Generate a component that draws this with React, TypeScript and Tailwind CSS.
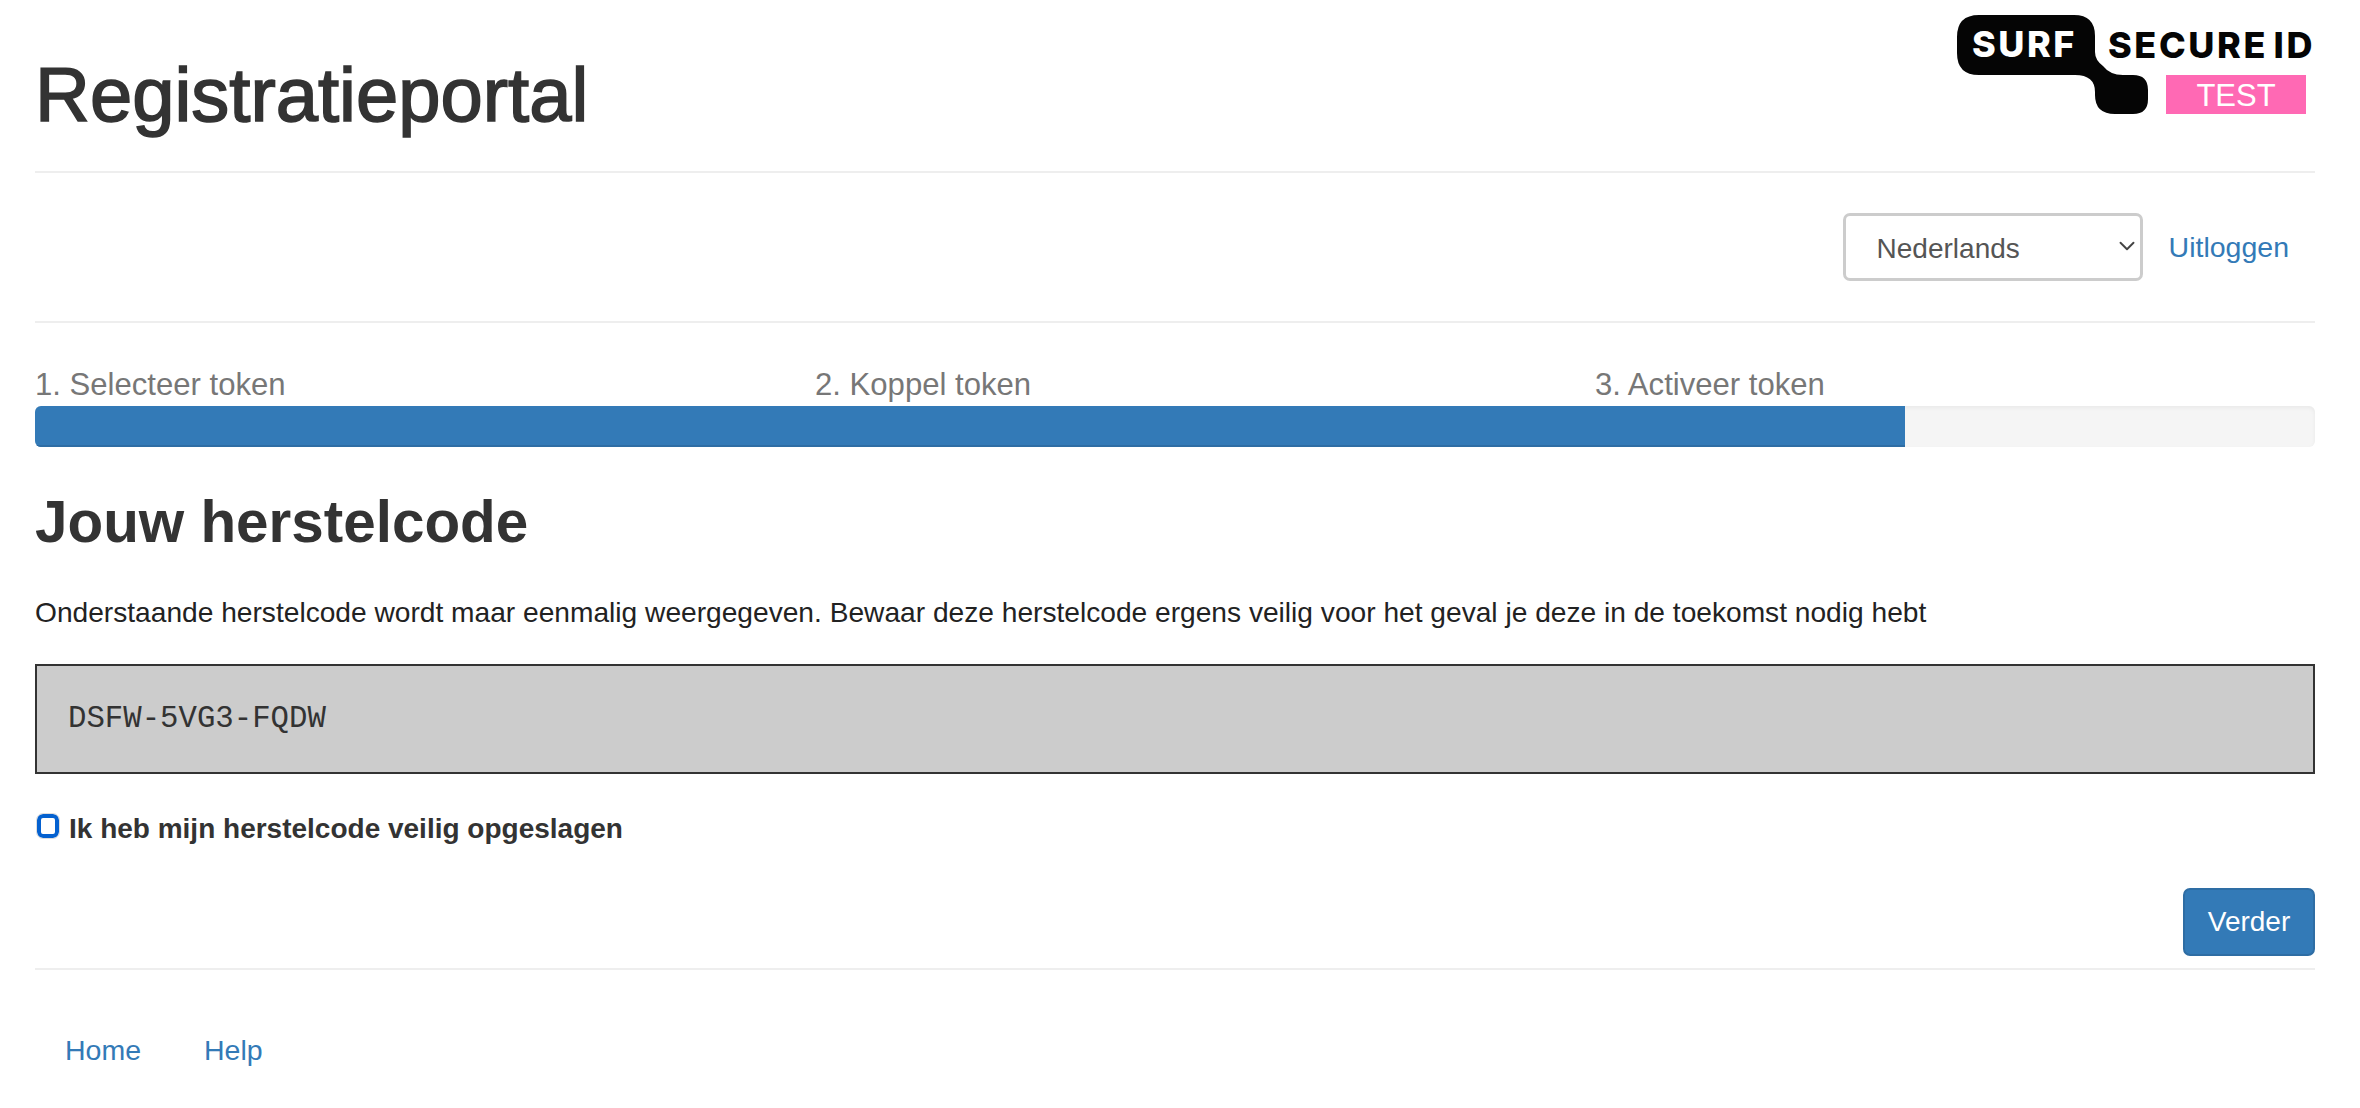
import { ChevronDown } from "lucide-react";

const sans = "font-['Liberation_Sans',Arial,sans-serif]";

function Logo() {
  return (
    <svg width="358" height="114" viewBox="0 0 358 114" className="block overflow-visible" aria-label="SURF Secure ID test">
      <path
        d="M22 15 H117 Q138 15 138 36 V52 Q138 60 146 66 Q153 75 166 75 H176 Q191 75 191 90 V99 Q191 114 176 114 H158 Q138 114 138 95 V92 Q138 75 118 75 H22 Q0 75 0 53 V37 Q0 15 22 15 Z"
        fill="#050505"
      />
      <text x="15" y="57" fill="#fff" fontFamily="Inter, sans-serif" fontWeight="800" fontSize="36" letterSpacing="2.5">SURF</text>
      <text x="151" y="58" fill="#050505" fontFamily="Inter, sans-serif" fontWeight="800" fontSize="36" letterSpacing="2.6" wordSpacing="-5">SECURE ID</text>
      <rect x="209" y="75" width="140" height="39" fill="#ff69b4" />
      <text x="279" y="106" fill="#fff" fontFamily="Liberation Sans, sans-serif" fontSize="31" textAnchor="middle">TEST</text>
    </svg>
  );
}

export default function App() {
  return (
    <div className={`${sans} bg-white h-[1108px] overflow-hidden pl-[35px] pr-[45px] text-[31px] text-[#333]`}>
      <header className="relative h-[173px] border-b-2 border-[#eee] flex items-end justify-between">
        <h1 className="text-[76px] leading-none pb-[38px] font-normal [-webkit-text-stroke:1.6px_#333]">Registratieportal</h1>
        <div className="self-start">
          <Logo />
        </div>
      </header>

      <nav className="h-[150px] border-b-2 border-[#eee] flex items-center justify-end pr-[26px] gap-[26px]">
        <div className="relative">
          <select className="appearance-none w-[300px] h-[68px] rounded-[7px] border-[3px] border-[#ccc] bg-white pl-[31px] pt-[3px] text-[28px] text-[#555]">
            <option>Nederlands</option>
          </select>
          <ChevronDown className="absolute right-[3px] top-[20px] text-[#444]" size={26} strokeWidth={1.75} />
        </div>
        <a className="text-[#337ab7] text-[28.5px] pt-[1px]">Uitloggen</a>
      </nav>

      <div className="grid grid-cols-[780px_780px_1fr] mt-[40px] text-[#777] text-[31.1px] leading-[44px] h-[43px]">
        <span>1. Selecteer token</span>
        <span>2. Koppel token</span>
        <span>3. Activeer token</span>
      </div>
      <div className="h-[41px] rounded-[6px] bg-[#f5f5f5] overflow-hidden shadow-inner">
        <div className="h-full w-[82%] bg-[#337ab7] border-b-2 border-[#2e6da4]" />
      </div>

      <h2 className="mt-[42px] text-[58.4px] leading-[66px] font-bold">Jouw herstelcode</h2>
      <p className="mt-[38px] text-[28.15px] leading-[40px] text-[#222]">
        Onderstaande herstelcode wordt maar eenmalig weergegeven. Bewaar deze herstelcode ergens veilig voor het geval je deze in de toekomst nodig hebt
      </p>

      <pre className="mt-[31px] h-[110px] border-2 border-[#333] bg-[#ccc] flex items-center pl-[31px] font-['Liberation_Mono',monospace] text-[30.7px]">DSFW-5VG3-FQDW</pre>

      <label className="flex items-center mt-[36px] h-[38px] font-bold text-[28px]">
        <input type="checkbox" className="appearance-none w-[22px] h-[24px] rounded-[6px] border-[4px] border-[#0461d0] bg-white outline outline-[#ddd] ml-[2px] mr-[10px] mb-[6px]" />
        Ik heb mijn herstelcode veilig opgeslagen
      </label>

      <div className="flex justify-end mt-[40px] pb-[12px] border-b-2 border-[#eee]">
        <button className="w-[132px] h-[68px] rounded-[7px] bg-[#337ab7] border-2 border-[#2e6da4] text-white text-[28px]">Verder</button>
      </div>

      <footer className="flex gap-[63px] pl-[30px] mt-[60px] text-[#337ab7] text-[28.5px] leading-[40px]">
        <a>Home</a>
        <a>Help</a>
      </footer>
    </div>
  );
}
